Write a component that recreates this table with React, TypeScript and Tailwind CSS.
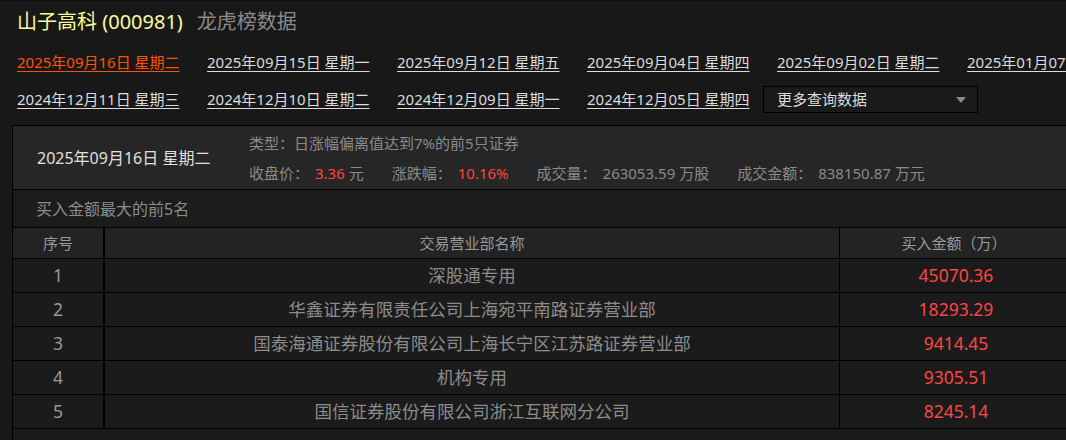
const row1 = [
  "2025年09月16日 星期二",
  "2025年09月15日 星期一",
  "2025年09月12日 星期五",
  "2025年09月04日 星期四",
  "2025年09月02日 星期二",
  "2025年01月07日 星期二",
];

const row2 = [
  "2024年12月11日 星期三",
  "2024年12月10日 星期二",
  "2024年12月09日 星期一",
  "2024年12月05日 星期四",
];

const buyers = [
  { name: "深股通专用", amount: "45070.36" },
  { name: "华鑫证券有限责任公司上海宛平南路证券营业部", amount: "18293.29" },
  { name: "国泰海通证券股份有限公司上海长宁区江苏路证券营业部", amount: "9414.45" },
  { name: "机构专用", amount: "9305.51" },
  { name: "国信证券股份有限公司浙江互联网分公司", amount: "8245.14" },
];

function DateLink({ label, active, className }: { label: string; active?: boolean; className?: string }) {
  return (
    <div className={`shrink-0 ${className ?? "w-[190px]"}`}>
      <a
        href="#"
        className={`underline underline-offset-[3px] whitespace-nowrap ${active ? "text-[#ff5206]" : "text-[#dcdcdc]"}`}
      >
        {label}
      </a>
    </div>
  );
}

function Stat({ label, value, unit, red }: { label: string; value: string; unit?: string; red?: boolean }) {
  return (
    <span className="mr-[28px] whitespace-nowrap">
      <span>{label}</span>
      <span className={`ml-[6px] ${red ? "text-[#ff4343]" : ""}`}>{value}</span>
      {unit && <span> {unit}</span>}
    </span>
  );
}

export default function App() {
  return (
    <div className="w-full h-[440px] overflow-hidden bg-[#181818] border-t border-[#0e0e0e] font-['Noto_Sans','Noto_Sans_CJK_SC',sans-serif]">
      <div className="w-[1200px] pl-[12px]">
        {/* Title */}
        <div className="mt-[6px] h-[30px] leading-[30px] pl-[5px] text-[20px] whitespace-nowrap">
          <span className="text-[#fbfb9c]">山子高科 (000981)</span>
          <span className="ml-[14px] text-[#8a8a8a]">龙虎榜数据</span>
        </div>

        {/* Date links */}
        <div className="mt-[7px] pl-[5px] text-[15px]">
          <div className="flex h-[37px] items-center">
            {row1.map((d, i) => (
              <DateLink key={d} label={d} active={i === 0} />
            ))}
          </div>
          <div className="flex h-[37px] items-center">
            {row2.map((d, i) => (
              <DateLink key={d} label={d} className={i === 3 ? "w-[176px]" : "w-[190px]"} />
            ))}
            <div className="flex h-[27px] w-[215px] shrink-0 items-center justify-between border border-black bg-[#1a1a1a] pl-[13px] pr-[11px] text-[#dcdcdc]">
              <span>更多查询数据</span>
              <svg width="10" height="6" viewBox="0 0 10 6">
                <path d="M0 0 H10 L5 6 Z" fill="#8a8a8a" />
              </svg>
            </div>
          </div>
        </div>

        {/* Panel */}
        <div className="mt-[7px] w-[1060px] border-l border-t border-black">
          <div className="flex h-[64px] items-center bg-[#262626] border-b border-black">
            <div className="w-[236px] shrink-0 pl-[24px] text-[16px] text-[#e0e0e0] whitespace-nowrap">
              2025年09月16日 星期二
            </div>
            <div className="text-[15px] text-[#8a8a8a] leading-[30px]">
              <div>类型：日涨幅偏离值达到7%的前5只证券</div>
              <div className="flex">
                <Stat label="收盘价：" value="3.36" unit="元" red />
                <Stat label="涨跌幅：" value="10.16%" red />
                <Stat label="成交量：" value="263053.59" unit="万股" />
                <Stat label="成交金额：" value="838150.87" unit="万元" />
              </div>
            </div>
          </div>

          <div className="flex h-[38px] items-center bg-[#1c1c1c] border-b border-black pl-[23px] text-[16px] text-[#8c8c8c]">
            买入金额最大的前5名
          </div>

          {/* Table */}
          <div className="bg-[#1b1b1b]">
            <div className="flex h-[31px] border-b border-black bg-[#232323] text-[15px] text-[#9a9a9a]">
              <div className="flex w-[92px] items-center justify-center border-r-2 border-black">序号</div>
              <div className="flex w-[735px] items-center justify-center border-r border-black">交易营业部名称</div>
              <div className="flex flex-1 items-center justify-center pr-[4px]">买入金额（万）</div>
            </div>
            {buyers.map((b, i) => (
              <div key={b.name} className="flex h-[34px] border-b border-black text-[17.5px]">
                <div className="flex w-[92px] items-center justify-center border-r-2 border-black text-[#9a9a9a]">{i + 1}</div>
                <div className="flex w-[735px] items-center justify-center border-r border-black text-[#8c8c8c] whitespace-nowrap">
                  {b.name}
                </div>
                <div className="flex flex-1 items-center justify-center text-[#ff4545]">{b.amount}</div>
              </div>
            ))}
            <div className="h-[20px]" />
          </div>
        </div>
      </div>
    </div>
  );
}
